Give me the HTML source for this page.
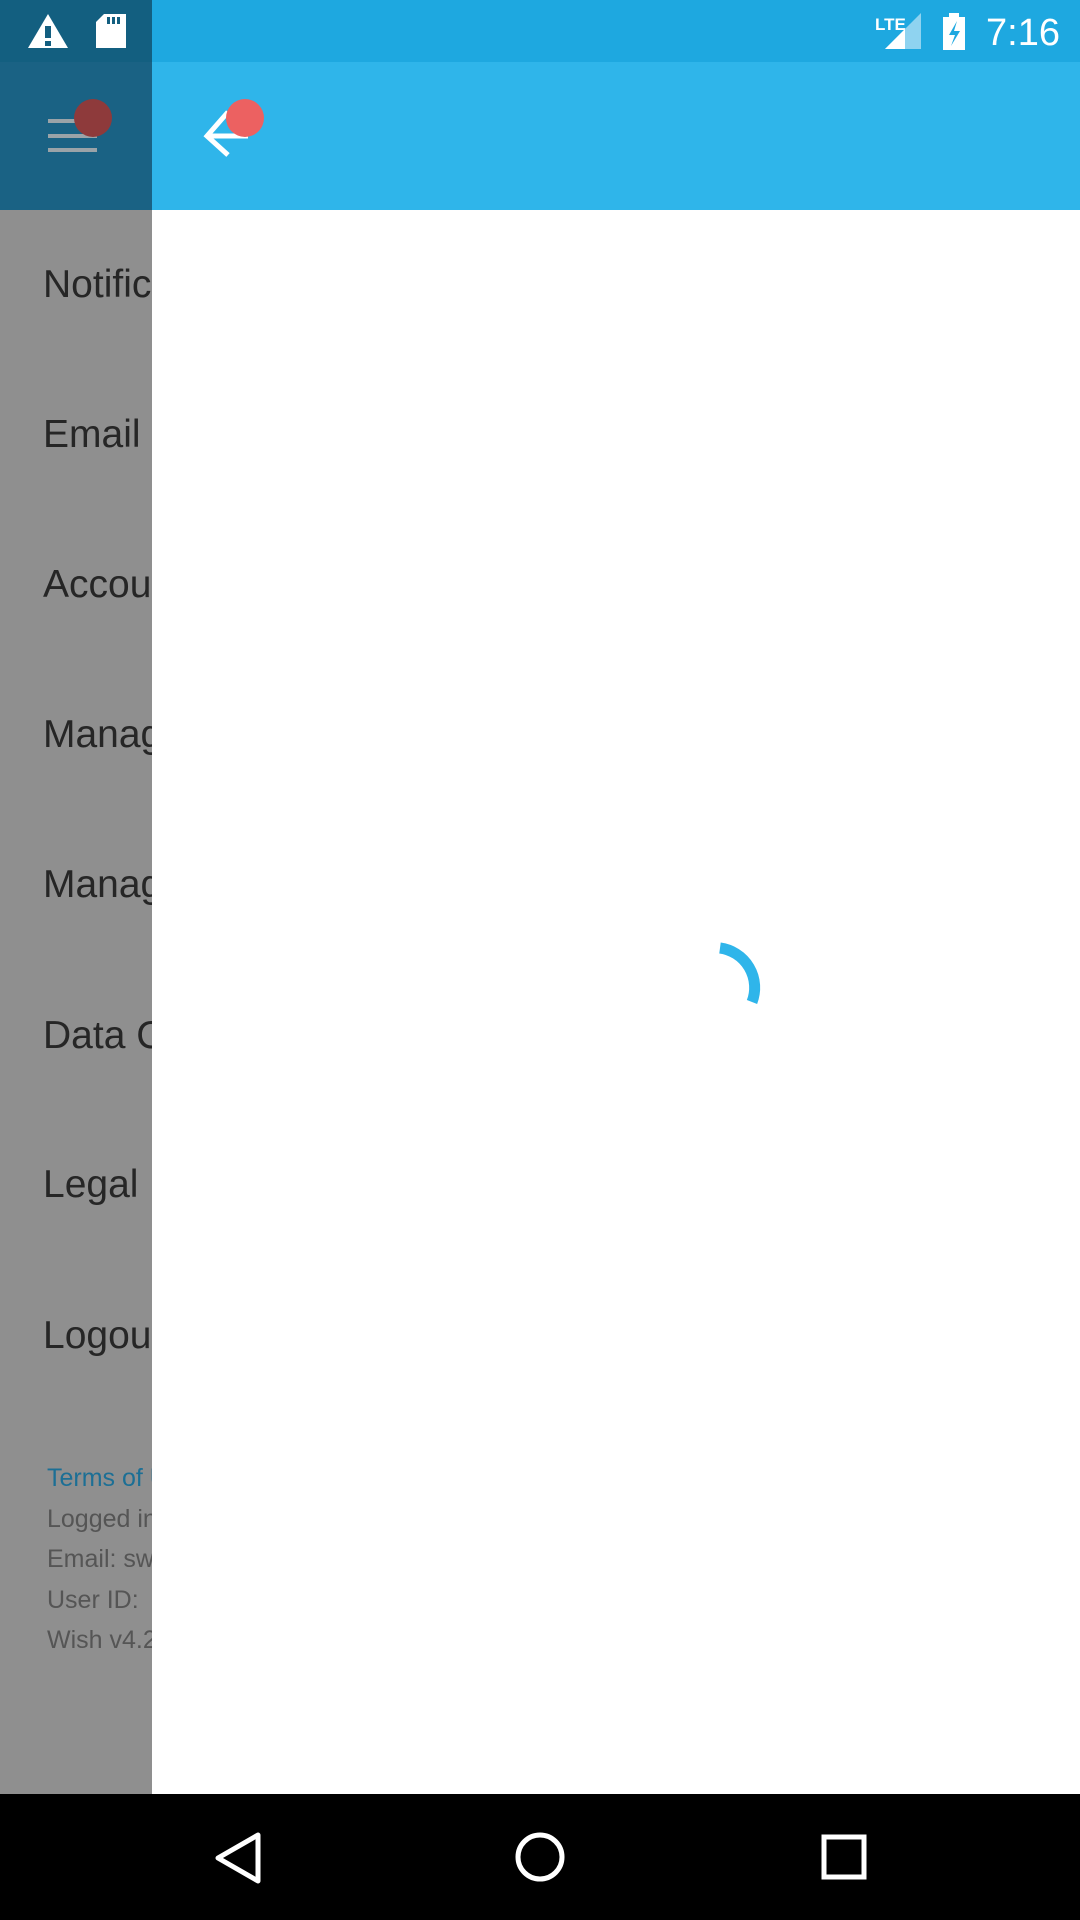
<!DOCTYPE html>
<html><head><meta charset="utf-8"><style>
body{margin:0;width:1080px;height:1920px;position:relative;overflow:hidden;font-family:"Liberation Sans",sans-serif;background:#fff}
div{position:absolute}
.mi{left:43px;font-size:39px;color:#262626;white-space:nowrap}
.ft{left:47px;font-size:25px;color:#555;white-space:nowrap}
</style></head><body>
<div style="left:0;top:0;width:152px;height:62px;background:#135f80"></div>
<div style="left:152px;top:0;width:928px;height:62px;background:#1ea8e0"></div>
<div style="left:0;top:62px;width:152px;height:148px;background:#1a6284"></div>
<div style="left:152px;top:62px;width:928px;height:148px;background:#2fb5ea"></div>
<div style="left:0;top:210px;width:152px;height:1584px;background:#8f8f8f;overflow:hidden">
<div class="mi" style="top:53px">Notifications</div>
<div class="mi" style="top:203px">Email</div>
<div class="mi" style="top:353px">Account</div>
<div class="mi" style="top:503px">Manage</div>
<div class="mi" style="top:653px">Manage</div>
<div class="mi" style="top:804px">Data Control</div>
<div class="mi" style="top:953px">Legal</div>
<div class="mi" style="top:1104px">Logout</div>
<div class="ft" style="top:1254px;color:#1c6f95">Terms of Use</div>
<div class="ft" style="top:1295px">Logged in</div>
<div class="ft" style="top:1335px">Email: sw</div>
<div class="ft" style="top:1376px">User ID:</div>
<div class="ft" style="top:1416px">Wish v4.2</div>
</div>
<div style="left:0;top:1794px;width:1080px;height:126px;background:#000"></div>
<svg width="1080" height="1920" style="position:absolute;left:0;top:0">
<polygon points="28,48 48,14 68,48" fill="#fff"/><rect x="45" y="26" width="6" height="12" fill="#135f80"/><rect x="45" y="41" width="6" height="5" fill="#135f80"/>
<path d="M104,14 H126 V48 H96 V22 Z" fill="#fff"/><rect x="107" y="17" width="3" height="7" fill="#135f80"/><rect x="112" y="17" width="3" height="7" fill="#135f80"/><rect x="117" y="17" width="3" height="7" fill="#135f80"/>
<text x="875" y="30" font-size="17" font-weight="bold" fill="#fff" font-family="Liberation Sans">LTE</text>
<polygon points="885,49 921,13 921,49" fill="#8fd3f0"/><polygon points="885,49 905,29 905,49" fill="#fff"/>
<rect x="943" y="17" width="22" height="33" fill="#fff"/><rect x="949" y="13" width="10" height="5" fill="#fff"/>
<path d="M957,21 L949,35 H955 L951,46 L960,31 H954 Z" fill="#1ea8e0"/>
<text x="986" y="45" font-size="38" fill="#fff" font-family="Liberation Sans">7:16</text>
<rect x="48" y="119" width="49" height="4" fill="#9aa3a8"/><rect x="48" y="134" width="49" height="4" fill="#9aa3a8"/><rect x="48" y="148" width="49" height="4" fill="#9aa3a8"/>
<circle cx="93" cy="118" r="19" fill="#8e3a3b"/>
<path d="M228,112 L207,136 L228,155 M207,136 H248" stroke="#fff" stroke-width="5" fill="none"/>
<circle cx="245" cy="118" r="19" fill="#ec6161"/>
<path d="M720,948 A40,40 0 0 1 752,1002" stroke="#2fb5ea" stroke-width="11" fill="none"/>
<polygon points="258,1835 218,1858 258,1881" fill="none" stroke="#fff" stroke-width="5" stroke-linejoin="round"/>
<circle cx="540" cy="1857" r="22" fill="none" stroke="#fff" stroke-width="5"/>
<rect x="824" y="1837" width="40" height="40" fill="none" stroke="#fff" stroke-width="5"/>
</svg>
</body></html>
